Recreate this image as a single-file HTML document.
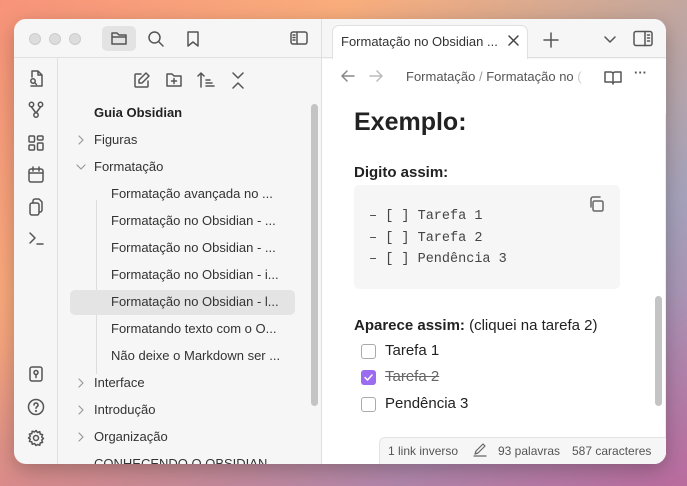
<!DOCTYPE html>
<html><head><meta charset="utf-8"><style>
*{box-sizing:border-box;margin:0;padding:0}
body{width:687px;height:486px;overflow:hidden;position:relative;font-family:"Liberation Sans",sans-serif;
background:linear-gradient(135deg,#f7937a 0%,#f9ad7c 30%,#c9a89a 55%,#a5a2bb 75%,#b27aa8 100%);}
.bg2{position:absolute;inset:0;background:linear-gradient(180deg,rgba(0,0,0,0) 60%,rgba(200,80,140,.35) 100%)}
.win{position:absolute;left:14px;top:19px;width:652px;height:445px;border-radius:12px;overflow:hidden;background:#f6f6f6;box-shadow:0 6px 20px rgba(0,0,0,.25)}
.abs{position:absolute}
.t{position:absolute;font-size:13px;color:#333;white-space:nowrap}
svg{position:absolute;fill:none;stroke:#555;stroke-width:1.5;stroke-linecap:round;stroke-linejoin:round}
.chev{stroke:#999;stroke-width:1.2}
</style></head><body><div class="bg2"></div>
<div class="win">
 <div class="abs" style="left:0;top:0;width:308px;height:39px;background:#f6f6f6;border-bottom:1px solid #e0e0e0"></div>
 <div class="abs" style="left:308px;top:0;width:344px;height:39px;background:#f6f6f6;border-bottom:1px solid #e0e0e0"></div>
 <div class="abs" style="left:15px;top:14px;width:12px;height:12px;border-radius:50%;background:#dcdcdc;border:1px solid #ccc"></div>
 <div class="abs" style="left:35px;top:14px;width:12px;height:12px;border-radius:50%;background:#dcdcdc;border:1px solid #ccc"></div>
 <div class="abs" style="left:55px;top:14px;width:12px;height:12px;border-radius:50%;background:#dcdcdc;border:1px solid #ccc"></div>
 <div class="abs" style="left:88px;top:7px;width:34px;height:25px;border-radius:5px;background:#e3e3e3"></div>
 <svg style="left:96px;top:11px" width="18" height="16" viewBox="0 0 18 16"><path d="M2 3h5l2 2h7v9H2z M2 7h14"/></svg>
 <svg style="left:133px;top:11px" width="18" height="18" viewBox="0 0 18 18"><circle cx="7.5" cy="7.5" r="5.5"/><path d="M12 12l4 4"/></svg>
 <svg style="left:172px;top:11px" width="14" height="18" viewBox="0 0 14 18"><path d="M2 2h10v14l-5-4-5 4z"/></svg>
 <svg style="left:276px;top:11px" width="18" height="16" viewBox="0 0 18 16"><rect x="1" y="2" width="16" height="12" rx="2"/><path d="M7 2v12M3 5h2M3 7.5h2M3 10h2"/></svg>
 <div class="abs" style="left:307px;top:0;width:1px;height:445px;background:#e0e0e0"></div>
 <div class="abs" style="left:318px;top:6px;width:196px;height:34px;background:#fff;border:1px solid #e0e0e0;border-bottom:none;border-radius:7px 7px 0 0"></div>
 <div class="t" style="left:327px;top:15px;font-size:13px;color:#333">Formatação no Obsidian ...</div>
 <svg style="left:494px;top:16px;stroke:#444" width="11" height="11" viewBox="0 0 11 11"><path d="M1 1l9 9M10 1L1 10"/></svg>
 <svg style="left:529px;top:13px" width="16" height="16" viewBox="0 0 16 16"><path d="M8 1v14M1 8h14"/></svg>
 <svg style="left:590px;top:17px" width="12" height="8" viewBox="0 0 12 8"><path d="M1 1l5 5 5-5"/></svg>
 <svg style="left:619px;top:11px" width="20" height="17" viewBox="0 0 20 17"><rect x="1" y="1.5" width="18" height="14" rx="2"/><path d="M12 1.5v14M14.5 5h2M14.5 8h2M14.5 11h2"/></svg>
 <div class="abs" style="left:43px;top:39px;width:1px;height:406px;background:#e0e0e0"></div>
 <svg style="left:14px;top:51px" width="16" height="18" viewBox="0 0 16 18"><path d="M4 1h6l4 4v11H3M4 1v6M10 1v4h4"/><circle cx="5" cy="11" r="2.2"/><path d="M6.6 12.6l1.8 1.8"/></svg>
 <svg style="left:14px;top:82px" width="16" height="18" viewBox="0 0 16 18"><circle cx="3.5" cy="3.5" r="2.2"/><circle cx="12.5" cy="3.5" r="2.2"/><circle cx="8" cy="14" r="2.2"/><path d="M3.5 6l4.5 6M12.5 6L8 12"/></svg>
 <svg style="left:14px;top:116px" width="16" height="16" viewBox="0 0 16 16"><rect x="1" y="1" width="5.5" height="6" rx="1"/><rect x="9.5" y="1" width="5.5" height="4" rx="1"/><rect x="1" y="10" width="5.5" height="5" rx="1"/><rect x="9.5" y="8" width="5.5" height="7" rx="1"/></svg>
 <svg style="left:13px;top:147px" width="18" height="18" viewBox="0 0 18 18"><rect x="2" y="3" width="14" height="13" rx="2"/><path d="M2 7h14M6 1v4M12 1v4"/></svg>
 <svg style="left:14px;top:179px" width="16" height="18" viewBox="0 0 16 18"><rect x="2" y="5" width="9" height="12" rx="2"/><path d="M5 5V3a2 2 0 012-2h4l3 3v8a2 2 0 01-2 2h-1"/></svg>
 <svg style="left:14px;top:212px" width="16" height="14" viewBox="0 0 16 14"><path d="M2 2l5 5-5 5M9 13h6"/></svg>
 <svg style="left:14px;top:346px" width="16" height="18" viewBox="0 0 16 18"><rect x="2" y="2" width="12" height="14" rx="2"/><circle cx="8" cy="7.5" r="2"/><path d="M8 9.5v3"/></svg>
 <svg style="left:13px;top:379px" width="18" height="18" viewBox="0 0 18 18"><circle cx="9" cy="9" r="7.5"/><path d="M7 7a2 2 0 113 1.7c-.7.4-1 .8-1 1.5"/><circle cx="9" cy="13" r=".4"/></svg>
 <svg style="left:13px;top:410px" width="18" height="18" viewBox="0 0 18 18"><circle cx="9" cy="9" r="2.5"/><path d="M9 1.5l1.5 2 2.3-.8.4 2.4 2.4.5-.9 2.3 1.8 1.6-1.8 1.6.9 2.3-2.4.5-.4 2.4-2.3-.8L9 16.5l-1.5-2-2.3.8-.4-2.4-2.4-.5.9-2.3L1.5 9l1.8-1.6-.9-2.3 2.4-.5.4-2.4 2.3.8z"/></svg>
 <svg style="left:119px;top:52px" width="18" height="18" viewBox="0 0 18 18"><path d="M8 3H3a1 1 0 00-1 1v11a1 1 0 001 1h11a1 1 0 001-1v-5M13 2l3 3-7 7H6V9z"/></svg>
 <svg style="left:151px;top:53px" width="18" height="16" viewBox="0 0 18 16"><path d="M2 2h5l2 2h7v10H2z M9 6.5v5M6.5 9h5"/></svg>
 <svg style="left:183px;top:52px" width="18" height="18" viewBox="0 0 18 18"><path d="M4 16V2M1 5l3-3 3 3M9 9h4M9 12h6M9 15h8"/></svg>
 <svg style="left:218px;top:53px" width="12" height="17" viewBox="0 0 12 17"><path d="M1 1l5 5 5-5M1 16l5-5 5 5"/></svg>
 <div class="t" style="left:80px;top:86px;font-weight:bold;color:#222">Guia Obsidian</div>
 <svg class="chev" style="left:64px;top:116px" width="6" height="10" viewBox="0 0 6 10"><path d="M1 1l4 4-4 4"/></svg><div class="t" style="left:80px;top:113px">Figuras</div>
 <svg class="chev" style="left:62px;top:145px" width="10" height="6" viewBox="0 0 10 6"><path d="M1 1l4 4 4-4"/></svg>
 <div class="t" style="left:80px;top:140px">Formatação</div>
 <div class="abs" style="left:82px;top:181px;width:1px;height:174px;background:#ddd"></div>
 <div class="t" style="left:97px;top:167px">Formatação avançada no ...</div>
 <div class="t" style="left:97px;top:194px">Formatação no Obsidian - ...</div>
 <div class="t" style="left:97px;top:221px">Formatação no Obsidian - ...</div>
 <div class="t" style="left:97px;top:248px">Formatação no Obsidian - i...</div>
 <div class="abs" style="left:56px;top:271px;width:225px;height:25px;border-radius:5px;background:#e4e4e4"></div>
 <div class="t" style="left:97px;top:275px">Formatação no Obsidian - l...</div>
 <div class="t" style="left:97px;top:302px">Formatando texto com o O...</div>
 <div class="t" style="left:97px;top:329px">Não deixe o Markdown ser ...</div>
 <svg class="chev" style="left:64px;top:359px" width="6" height="10" viewBox="0 0 6 10"><path d="M1 1l4 4-4 4"/></svg><div class="t" style="left:80px;top:356px">Interface</div>
 <svg class="chev" style="left:64px;top:386px" width="6" height="10" viewBox="0 0 6 10"><path d="M1 1l4 4-4 4"/></svg><div class="t" style="left:80px;top:383px">Introdução</div>
 <svg class="chev" style="left:64px;top:413px" width="6" height="10" viewBox="0 0 6 10"><path d="M1 1l4 4-4 4"/></svg><div class="t" style="left:80px;top:410px">Organização</div>
 <div class="t" style="left:80px;top:437px">CONHECENDO O OBSIDIAN</div>
 <div class="abs" style="left:297px;top:85px;width:7px;height:302px;border-radius:4px;background:#c4c4c4"></div>
 <div class="abs" style="left:308px;top:40px;width:344px;height:405px;background:#fff"></div>
 <svg style="left:327px;top:51px;stroke:#888" width="14" height="12" viewBox="0 0 14 12"><path d="M13 6H1M6 1L1 6l5 5"/></svg>
 <svg style="left:355px;top:51px;stroke:#bbb" width="14" height="12" viewBox="0 0 14 12"><path d="M1 6h12M8 1l5 5-5 5"/></svg>
 <div class="t" style="left:392px;top:50px;color:#555">Formatação <span style="color:#999">/</span> Formatação no <span style="color:#ccc">(</span></div>
 <svg style="left:590px;top:51px" width="18" height="15" viewBox="0 0 18 15"><path d="M1 2h6a2 2 0 012 2v10a2 2 0 00-2-2H1zM17 2h-6a2 2 0 00-2 2v10a2 2 0 012-2h6z"/></svg>
 <div class="t" style="left:620px;top:46px;color:#555;font-weight:bold">···</div>
 <div class="abs" style="left:651px;top:95px;width:1px;height:350px;background:#eee"></div>
 <div class="abs" style="left:641px;top:277px;width:7px;height:110px;border-radius:4px;background:#c4c4c4"></div>
 <div class="t" style="left:340px;top:89px;font-size:25px;font-weight:bold;color:#222">Exemplo:</div>
 <div class="t" style="left:340px;top:145px;font-size:15px;font-weight:bold;color:#222">Digito assim:</div>
 <div class="abs" style="left:340px;top:166px;width:266px;height:104px;background:#f6f6f6;border-radius:5px"></div>
 <svg style="left:574px;top:176px;stroke:#666" width="18" height="18" viewBox="0 0 18 18"><rect x="5" y="6" width="10" height="10" rx="1.5"/><path d="M3 12V4a2 2 0 012-2h7"/></svg>
 <div class="t" style="left:355px;top:187px;font-family:'Liberation Mono',monospace;font-size:13.5px;line-height:21.5px;color:#444">– [ ] Tarefa 1<br>– [ ] Tarefa 2<br>– [ ] Pendência 3</div>
 <div class="t" style="left:340px;top:298px;font-size:15px;color:#222"><b>Aparece assim:</b> (cliquei na tarefa 2)</div>
 <div class="abs" style="left:347px;top:325px;width:15px;height:15px;border:1px solid #aaa;border-radius:3px"></div>
 <div class="t" style="left:371px;top:323px;font-size:15px;color:#222">Tarefa 1</div>
 <div class="abs" style="left:347px;top:351px;width:15px;height:15px;background:#9b6cf0;border-radius:3px"></div>
 <svg style="left:349px;top:353px;stroke:#fff" width="11" height="11" viewBox="0 0 11 11"><path d="M2 5.5l2.5 2.5L9 3"/></svg>
 <div class="t" style="left:371px;top:349px;font-size:15px;color:#666;text-decoration:line-through">Tarefa 2</div>
 <div class="abs" style="left:347px;top:378px;width:15px;height:15px;border:1px solid #aaa;border-radius:3px"></div>
 <div class="t" style="left:371px;top:376px;font-size:15px;color:#222">Pendência 3</div>
 <div class="abs" style="left:365px;top:418px;width:290px;height:30px;background:#f6f6f6;border:1px solid #e3e3e3;border-radius:6px 0 0 0"></div>
 <div class="t" style="left:374px;top:425px;font-size:12px;color:#555">1 link inverso</div>
 <svg style="left:459px;top:424px;stroke:#666;stroke-width:1.2" width="14" height="14" viewBox="0 0 14 14"><path d="M2 11l1-3 7-7 2 2-7 7zM1 13h12"/></svg>
 <div class="t" style="left:484px;top:425px;font-size:12px;color:#555">93 palavras</div>
 <div class="t" style="left:558px;top:425px;font-size:12px;color:#555">587 caracteres</div>
</div>
</body></html>
